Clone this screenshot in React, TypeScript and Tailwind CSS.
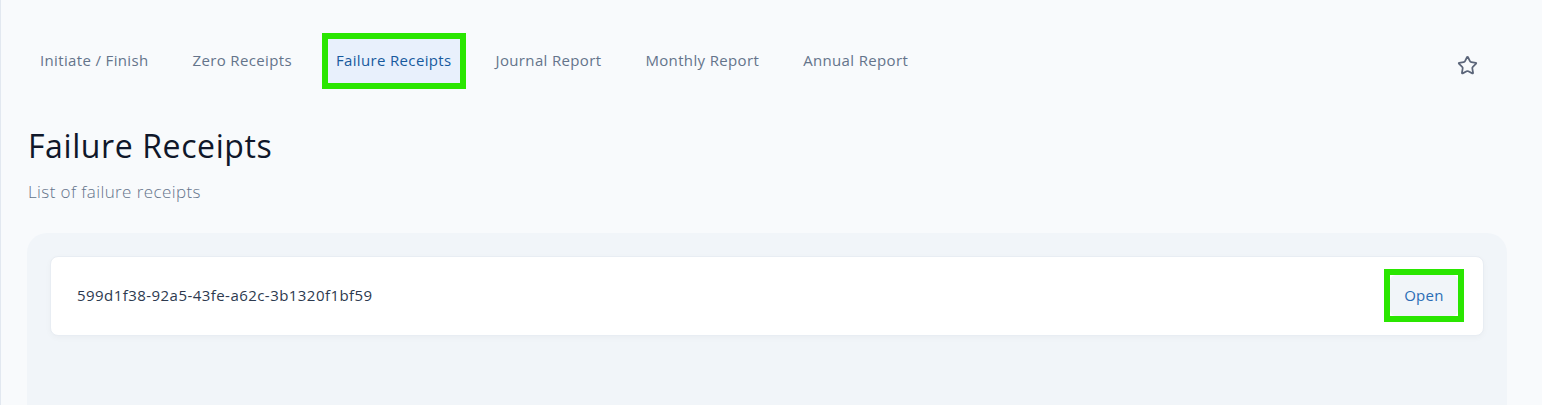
import React, { useState } from 'react';
import { Star } from 'lucide-react';

const tabs = ['Initiate / Finish', 'Zero Receipts', 'Failure Receipts', 'Journal Report', 'Monthly Report', 'Annual Report'];

const receipts = ['599d1f38-92a5-43fe-a62c-3b1320f1bf59'];

export default function App() {
  const [active, setActive] = useState('Failure Receipts');

  return (
    <div className="min-h-screen bg-[#f8fafc] border-l border-[#e2e8f0] pl-[26px] pr-[35px] font-['Open_Sans',sans-serif]">
      {/* ── Tabs ── */}
      <div className="flex items-center justify-between pt-[37px] pr-[21px]">
        <nav className="flex items-center gap-7 ml-[5px]">
          {tabs.map((tab) => {
            const isActive = tab === active;
            return (
              <button
                key={tab}
                onClick={() => setActive(tab)}
                className={`h-[44px] px-2 text-[15px] tracking-[0.35px] ${isActive ? 'bg-[#e8f0fc] text-[#175a9e] outline-[6px] outline-solid outline-[#2ae600]' : 'text-[#64748b] hover:text-[#334155]'}`}
              >
                {tab}
              </button>
            );
          })}
        </nav>
        <button className="p-2 mt-2.5 text-[#5b6579]" title="Favorite">
          <Star size={21} strokeWidth={2} />
        </button>
      </div>

      {/* ── Header ── */}
      <div className="mt-[42px] ml-px">
        <h1 className="text-[32px] leading-[40px] tracking-[0.6px] text-[#0f172a]">Failure Receipts</h1>
        <p className="mt-[13px] text-[17px] font-light tracking-[0.4px] text-[#64748b]">List of failure receipts</p>
      </div>

      {/* ── List ── */}
      <div className="mt-[28px] rounded-[20px] bg-[#f1f5f9] p-[23px] min-h-[240px]">
        {receipts.map((id) => (
          <div key={id} className="flex items-center justify-between h-[80px] pl-[26px] pr-[25px] bg-white rounded-lg border border-[#e8edf3] shadow-[0_2px_6px_rgba(15,23,42,0.03)]">
            <span className="text-[15px] tracking-[0.45px] text-[#2d3a4f]">{id}</span>
            <div className="outline-[6px] outline-solid outline-[#2ae600]">
              <button className="block h-[41px] w-[68px] rounded-md bg-[#f1f5f9] text-[15px] tracking-[0.3px] text-[#2a6db5]">
                Open
              </button>
            </div>
          </div>
        ))}
      </div>
    </div>
  );
}
